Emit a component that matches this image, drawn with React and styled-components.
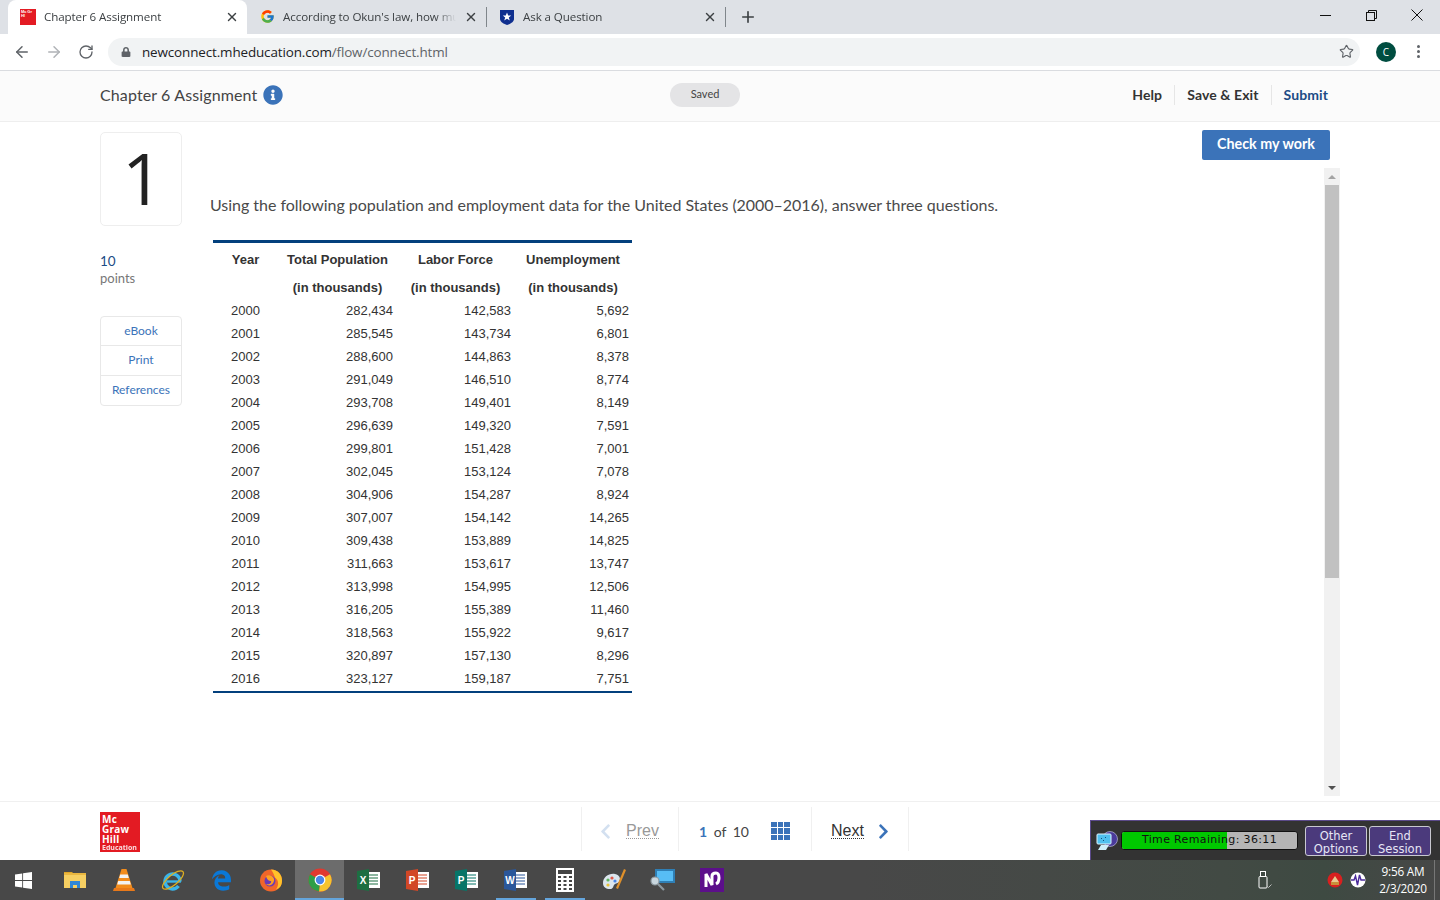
import React from "react";
import styled, { createGlobalStyle } from "styled-components";
import { ArrowLeft, ArrowRight, RotateCw, Star, X, Plus } from "lucide-react";
import { FaChevronLeft, FaChevronRight, FaInfoCircle, FaLock, FaEdgeLegacy } from "react-icons/fa";
import { FcGoogle } from "react-icons/fc";

const GlobalStyle = createGlobalStyle`
  html, body { margin: 0; padding: 0; background: #fff; }
  body { font-family: "Lato", "Open Sans", sans-serif; color: #333; }
  * { box-sizing: border-box; }
`;

const Page = styled.div`
  width: 1440px;
  height: 900px;
  display: flex;
  flex-direction: column;
  overflow: hidden;
`;

/* browser chrome */
const TabStrip = styled.div`
  height: 34px;
  flex: none;
  background: #dee1e6;
  display: flex;
  align-items: flex-end;
  padding-left: 8px;
`;

const Tab = styled.div`
  width: ${({ w }) => w}px;
  height: 34px;
  flex: none;
  display: flex;
  align-items: center;
  padding: 0 8px 1px 12px;
  gap: 8px;
  background: ${({ active }) => (active ? "#fff" : "transparent")};
  border-radius: 8px 8px 0 0;
  font-family: "Open Sans", sans-serif;
  font-size: 11.6px;
  letter-spacing: -0.1px;
  color: #3c4043;
`;

const TabDivider = styled.div`
  width: 1px;
  height: 20px;
  margin-bottom: 7px;
  background: #80868b;
  flex: none;
`;

const TabLabel = styled.span`
  flex: 1;
  white-space: nowrap;
  overflow: hidden;
  mask-image: linear-gradient(90deg, #000 88%, transparent 100%);
`;

const Favicon = styled.span`
  width: 16px;
  height: 16px;
  flex: none;
  display: flex;
  align-items: center;
  justify-content: center;
`;

const TinyLogo = styled.span`
  width: 16px;
  height: 16px;
  background: #e31b23;
  color: #fff;
  font: 700 4px/4px "Liberation Sans", sans-serif;
  padding: 1px;
  overflow: hidden;
`;

const NewTab = styled.div`
  width: 42px;
  height: 34px;
  padding-left: 2px;
  display: flex;
  align-items: center;
  justify-content: center;
  color: #3c4043;
`;

const WindowControls = styled.div`
  margin-left: auto;
  display: flex;
  align-self: flex-start;
  height: 30px;
  align-items: center;
  color: #111;
`;

const WindowButton = styled.div`
  width: 46px;
  height: 30px;
  display: flex;
  align-items: center;
  justify-content: center;
`;

const AddressRow = styled.div`
  height: 37px;
  flex: none;
  background: #fff;
  border-bottom: 1px solid #dadce0;
  display: flex;
  align-items: center;
  padding: 0 0 1px 6px;
  color: #5f6368;
`;

const NavButton = styled.div`
  width: 32px;
  height: 32px;
  display: flex;
  align-items: center;
  justify-content: center;
  color: ${({ off }) => (off ? "#b0b3b7" : "#5f6368")};
`;

const Omnibox = styled.div`
  margin-left: 6px;
  width: 1252px;
  height: 28px;
  border-radius: 14px;
  background: #f1f3f4;
  display: flex;
  align-items: center;
  padding: 0 6px 0 13px;
  gap: 11px;
`;

const Url = styled.span`
  flex: 1;
  font-family: "Open Sans", sans-serif;
  font-size: 13.45px;
  letter-spacing: -0.13px;
  color: #202124;
`;

const UrlPath = styled.span`
  color: #5f6368;
`;

const Avatar = styled.div`
  width: 20px;
  height: 20px;
  margin-left: 16px;
  border-radius: 50%;
  background: #004d40;
  color: #fff;
  font: 400 10px/20px "Open Sans", sans-serif;
  text-align: center;
`;

const Kebab = styled.div`
  margin-left: 20px;
  padding-left: 1px;
  display: flex;
  flex-direction: column;
  gap: 2px;
`;

const KebabDot = styled.span`
  width: 3px;
  height: 3px;
  border-radius: 50%;
  background: #5f6368;
`;

/* assignment header */
const AssignmentBar = styled.header`
  height: 51px;
  flex: none;
  background: #fbfbfb;
  border-bottom: 1px solid #eee;
  padding: 0 112px 2px 100px;
  display: grid;
  grid-template-columns: 570px 70px 1fr;
  align-items: center;
`;

const AssignmentTitle = styled.div`
  display: flex;
  align-items: center;
  gap: 6px;
  font-size: 16px;
  letter-spacing: 0.12px;
  color: #444;
`;

const TitleText = styled.span`
  margin-top: -2px;
`;

const SavedPill = styled.div`
  height: 24px;
  border-radius: 12px;
  background: #e4e4e6;
  font-size: 11px;
  line-height: 22px;
  text-align: center;
  color: #444;
`;

const HeaderLinks = styled.nav`
  display: flex;
  justify-content: flex-end;
  align-items: center;
`;

const HeaderLink = styled.a`
  font-size: 14px;
  font-weight: 700;
  letter-spacing: 0.1px;
  line-height: 20px;
  color: ${({ primary }) => (primary ? "#1c4b85" : "#333")};
  padding: 0 12px;
  border-right: ${({ primary }) => (primary ? "none" : "1px solid #e6e6e6")};
  &:last-child { padding-right: 0; }
`;

/* question area */
const Workspace = styled.main`
  flex: 1;
  min-height: 0;
  padding: 8px 100px 5px 100px;
  display: grid;
  grid-template-columns: 82px 1fr 16px;
  grid-template-rows: 38px 1fr;
`;

const Sidebar = styled.aside`
  grid-row: 1 / 3;
  padding-top: 2px;
`;

const NumberCard = styled.div`
  height: 94px;
  padding: 0 0 5px 3px;
  border: 1px solid #eee;
  border-radius: 5px;
  display: flex;
  align-items: center;
  justify-content: center;
  font-family: "Open Sans", sans-serif;
  font-size: 72px;
  line-height: 1;
  color: #222;
`;

const Points = styled.div`
  margin-top: 27px;
  font-size: 13.5px;
  line-height: 17px;
  color: #1c4b85;
`;

const PointsLabel = styled.div`
  font-size: 13px;
  line-height: 16px;
  color: #777;
`;

const ToolCard = styled.div`
  margin-top: 30px;
  border: 1px solid #e8e8e8;
  border-radius: 4px;
`;

const ToolRow = styled.a`
  display: block;
  height: 29.3px;
  text-align: center;
  font-size: 12px;
  line-height: 28px;
  color: #3b73b9;
  border-bottom: 1px solid #e8e8e8;
  &:last-child { border-bottom: none; }
`;

const CheckButton = styled.button`
  grid-column: 2 / 4;
  justify-self: end;
  margin-right: 10px;
  width: 128px;
  height: 30px;
  padding: 0 0 3px;
  border: none;
  border-radius: 2px;
  background: #3b73b9;
  color: #fff;
  font-family: inherit;
  font-size: 14.3px;
  font-weight: 700;
`;

const Question = styled.section`
  padding: 27px 0 0 28px;
`;

const Prompt = styled.p`
  margin: 0;
  font-size: 16px;
  letter-spacing: -0.03px;
  line-height: 20px;
  color: #4a4a4a;
`;

const DataTable = styled.table`
  margin: 25px 0 0 3px;
  width: 419px;
  table-layout: fixed;
  border-collapse: collapse;
  border-top: 3px solid #03407d;
  border-bottom: 2px solid #03407d;
  font-family: "Liberation Sans", sans-serif;
  font-size: 13px;
  color: #333;

  tbody tr:last-child td {
    height: 25px;
  }
`;

const HeadCell = styled.th`
  height: ${({ h }) => h}px;
  padding: 0;
  font-size: 13px;
  font-weight: 700;
  text-align: center;
  white-space: nowrap;
  color: #333;
`;

const Cell = styled.td`
  height: 23px;
  padding: 0 ${({ pad }) => pad || 0}px 0 0;
  text-align: ${({ center }) => (center ? "center" : "right")};
`;

const Scrollbar = styled.div`
  grid-column: 3;
  grid-row: 2;
  background: #f1f1f1;
  display: flex;
  flex-direction: column;
  align-items: center;
`;

const ScrollArrow = styled.div`
  height: 17px;
  flex: none;
  display: flex;
  align-items: center;
  justify-content: center;
  &::before {
    content: "";
    border-left: 4px solid transparent;
    border-right: 4px solid transparent;
    ${({ down }) => (down ? "border-top: 4px solid #505050;" : "border-bottom: 4px solid #a3a3a3;")}
  }
`;

const ScrollThumb = styled.div`
  width: 14px;
  height: 393px;
  background: #c1c1c1;
`;

const ScrollGap = styled.div`
  flex: 1;
`;

/* footer */
const Footer = styled.footer`
  position: relative;
  height: 59px;
  flex: none;
  border-top: 1px solid #f0f0f0;
  background: #fff;
  padding-left: 100px;
  display: flex;
  align-items: flex-start;
`;

const Logo = styled.div`
  width: 40px;
  height: 40px;
  margin-top: 10px;
  background: #e31b23;
  color: #fff;
  padding: 2px 1px 0 2px;
  font: 700 10px/10px "Open Sans", sans-serif;
  letter-spacing: 0.2px;
  overflow: hidden;
`;

const LogoSmall = styled.div`
  font-size: 7px;
  line-height: 7px;
  letter-spacing: 0;
  opacity: 0.85;
`;

const Pager = styled.nav`
  margin: 5px 0 0 441px;
  height: 44px;
  display: flex;
  border-left: 1px solid #f0f0f0;
`;

const PagerCell = styled.div`
  width: ${({ w }) => w}px;
  display: flex;
  align-items: center;
  padding: 4px 0 0 ${({ pad }) => pad}px;
  border-right: 1px solid #f0f0f0;
`;

const PagerLink = styled.a`
  font-family: "Liberation Sans", sans-serif;
  font-size: 16px;
  color: ${({ off }) => (off ? "#999" : "#333")};
  border-bottom: 1px dotted ${({ off }) => (off ? "#999" : "#333")};
  line-height: 15px;
  margin: 0 11px 0 ${({ left }) => left || 0}px;
`;

const PageCount = styled.span`
  width: 72px;
  flex: none;
  font-size: 14px;
  color: #444;
`;

const PageCurrent = styled.b`
  color: #3b73b9;
  margin-right: 3px;
`;

const PageTotal = styled.span`
  margin-left: 3px;
`;

const GridIcon = styled.div`
  width: 19px;
  height: 18px;
  display: grid;
  grid-template-columns: repeat(3, 1fr);
  gap: 1px;
`;

const GridDot = styled.span`
  background: #3b73b9;
`;

const ProctorPanel = styled.div`
  position: absolute;
  right: 0;
  bottom: 0;
  width: 350px;
  height: 40px;
  background: #333;
  border-top: 1px solid #5b4a8a;
  border-left: 1px solid #5b4a8a;
  display: flex;
  align-items: center;
  padding-left: 5px;
`;

const TimerBar = styled.div`
  position: relative;
  width: 177px;
  height: 19px;
  margin-left: 3px;
  background: #b5b5b5;
  border: 1px solid #111;
  border-radius: 3px;
  overflow: hidden;
  font: 400 11px/16px "DejaVu Sans", sans-serif;
  letter-spacing: 0.35px;
  color: #111;
  text-align: center;
`;

const TimerFill = styled.div`
  position: absolute;
  inset: 0 auto 0 0;
  background: #00c800;
`;

const TimerText = styled.span`
  position: relative;
`;

const ProctorButton = styled.button`
  width: 62px;
  height: 30px;
  margin-left: ${({ gap }) => gap}px;
  padding: 3px 0 0;
  background: #4b3a7c;
  border: 1px solid #c8c8d0;
  border-radius: 3px;
  color: #e6e6f5;
  font: 400 11.5px/13px "DejaVu Sans", sans-serif;
`;

/* windows taskbar */
const Taskbar = styled.div`
  height: 40px;
  flex: none;
  background: linear-gradient(90deg, #484848 0%, #484848 60%, #424a44 85%, #3e4a42 92%, #474747 100%);
  display: flex;
  padding-left: 1px;
`;

const TaskSlot = styled.div`
  position: relative;
  width: 49px;
  height: 40px;
  flex: none;
  display: flex;
  align-items: center;
  justify-content: center;
  background: ${({ active }) => (active ? "#6c6c6c" : "transparent")};
  &::after {
    content: "";
    position: absolute;
    bottom: 0;
    height: 2px;
    left: ${({ active }) => (active ? 0 : 5)}px;
    right: ${({ active }) => (active ? 0 : 4)}px;
    background: ${({ open }) => (open ? "#64a5dc" : "transparent")};
  }
`;

const StartSlot = styled(TaskSlot)`
  padding-right: 5px;
`;

const Tray = styled.div`
  margin-left: auto;
  display: flex;
  align-items: center;
  color: #fff;
`;

const TraySpacer = styled.span`
  width: ${({ w }) => w}px;
`;

const Clock = styled.div`
  width: 56px;
  margin: 0 1px 1px 9px;
  font-family: "Open Sans", sans-serif;
  font-size: 11.8px;
  line-height: 17px;
  letter-spacing: -0.2px;
  text-align: center;
`;

const DesktopEdge = styled.div`
  width: 6px;
  height: 40px;
  margin-left: 2px;
  border-left: 1px solid #777;
`;

const Win = () => (
  <svg width="17" height="17" viewBox="0 0 16 16" fill="#fff">
    <path d="M0 2.300 6.800 1.300V7.600H0ZM7.600 1.200 16 0V7.600H7.600ZM0 8.400H6.800V14.700L0 13.700ZM7.600 8.400H16V16L7.600 14.800Z" />
  </svg>
);

const Folder = () => (
  <svg width="22" height="20" viewBox="0 0 22 20">
    <path d="M0 2h8l2 2h-10z" fill="#e0a526" />
    <rect y="3" width="22" height="15" fill="#f6cf62" />
    <rect y="3" width="22" height="2" fill="#e9b63f" />
    <path d="M6 11h10v7h-3v-3h-4v3H6z" fill="#2f86d6" />
  </svg>
);

const Vlc = () => (
  <svg width="22" height="24" viewBox="0 0 22 24">
    <path d="M8.500 1h5l6 19H2.500z" fill="#f28c1c" />
    <path d="M7.200 6.500h7.600l1 3.500H6.200zM5.200 13h11.600l1 3.500H4.200z" fill="#f2f2f2" />
    <path d="M1 20h20l1 3H0z" fill="#e8791a" />
  </svg>
);

const Explorer = () => (
  <svg width="24" height="24" viewBox="0 0 24 24" fill="none">
    <path d="M19 13.500A7.500 7.500 0 1 0 17.500 18" stroke="#3ab5ea" strokeWidth="3.400" />
    <path d="M6 13.500H20" stroke="#3ab5ea" strokeWidth="2.400" />
    <ellipse cx="12" cy="12" rx="13" ry="5" transform="rotate(-40 12 12)" stroke="#e0b020" strokeWidth="1.300" />
  </svg>
);

const Firefox = () => (
  <svg width="24" height="24" viewBox="0 0 24 24">
    <circle cx="12" cy="12.500" r="11" fill="#f0662a" />
    <path d="M12 1.500c7 0 11 5 11 11s-3 8-6 9c3-4 3-9-1-12-1-3-2-5-4-8z" fill="#ffc22a" />
    <circle cx="11" cy="13" r="5.500" fill="#6a3bb5" />
    <path d="M7 8c4-2 9 1 8 5s-5 6-8 3c3 1 6-1 5-3-2 0-4-1-5-5z" fill="#ffa01f" />
  </svg>
);

const Chrome = () => (
  <svg width="24" height="24" viewBox="0 0 24 24">
    <circle cx="12" cy="12" r="11.500" fill="#e0392f" />
    <path d="M12 12 22 6.200A11.500 11.500 0 0 1 11 23.500z" fill="#f7c42d" />
    <path d="M12 12 11 23.500A11.500 11.500 0 0 1 2 6.200z" fill="#2f9e48" />
    <circle cx="12" cy="12" r="5.400" fill="#fff" />
    <circle cx="12" cy="12" r="4.200" fill="#4a86e8" />
  </svg>
);

const Office = ({ color, letter }) => (
  <svg width="24" height="22" viewBox="0 0 24 22">
    <rect x="9" y="3" width="14" height="16" fill="#fff" />
    <path d="M12 6h9M12 9h9M12 12h9M12 15h9" stroke={color} strokeWidth="1.200" />
    <path d="M0 2 12 0V22L0 20z" fill={color} />
    <text x="6" y="15" fill="#fff" fontFamily="Liberation Sans" fontSize="10" fontWeight="700" textAnchor="middle">
      {letter}
    </text>
  </svg>
);

const Calculator = () => (
  <svg width="18" height="24" viewBox="0 0 18 24">
    <rect width="18" height="24" fill="#fff" />
    <rect x="2" y="2" width="14" height="4" fill="#444" />
    {[8, 12, 16, 20].map((y) =>
      [2, 7.5, 13].map((x) => <rect key={`${x}${y}`} x={x} y={y} width="3" height="2" fill="#444" />)
    )}
  </svg>
);

const Palette = () => (
  <svg width="24" height="24" viewBox="0 0 24 24">
    <path d="M1 15c0-6 6-10 12-9 5 1 6 5 4 8-2 2-4 1-5 3s-1 4-4 4c-4 0-7-2-7-6z" fill="#dce6ee" />
    <circle cx="6" cy="12" r="1.600" fill="#5fb65f" />
    <circle cx="10" cy="10" r="1.600" fill="#e05a4a" />
    <circle cx="13" cy="13" r="1.600" fill="#4a86e8" />
    <circle cx="6" cy="17" r="1.600" fill="#e8c23a" />
    <path d="M22 1 14 20l2 1 8-19z" fill="#e0902a" />
  </svg>
);

const Magnifier = () => (
  <svg width="25" height="24" viewBox="0 0 25 24">
    <rect x="5" y="1" width="20" height="14" fill="#2f7fb5" />
    <rect x="7" y="3" width="16" height="10" fill="#57bdf5" />
    <circle cx="5" cy="13" r="4" fill="#c9d6de" stroke="#8b979e" strokeWidth="1.200" />
    <path d="M8 16l6 6" stroke="#8b979e" strokeWidth="2.200" />
  </svg>
);

const NoteApp = () => (
  <svg width="24" height="24" viewBox="0 0 24 24">
    <rect width="24" height="24" fill="#5c0f8b" />
    <path d="M6 19V6l6 11V8c0-2 2-3 4-3s3 2 3 5-1 5-3 6" fill="none" stroke="#fff" strokeWidth="3" />
  </svg>
);

const Usb = () => (
  <svg width="14" height="18" viewBox="0 0 14 18" fill="none" stroke="#fff">
    <rect x="2.500" y="0.500" width="5" height="5" />
    <rect x="1" y="5.500" width="8" height="11.500" rx="1" />
    <path d="M9 15l1.500 1.500 3-3" stroke="#bbb" />
  </svg>
);

const TrayBadge = () => (
  <svg width="16" height="16" viewBox="0 0 16 16">
    <circle cx="8" cy="8" r="7.500" fill="#d8201f" />
    <path d="M4 10l4-6 4 6z" fill="#e8c98f" />
    <rect x="4" y="10" width="8" height="3" fill="#c98f3a" />
  </svg>
);

const TrayWave = () => (
  <svg width="16" height="16" viewBox="0 0 16 16">
    <circle cx="8" cy="8" r="7.500" fill="#fff" />
    <path d="M1 8h3l1.500-4 2 9 2-10 1.500 5h4" fill="none" stroke="#4b2a9c" strokeWidth="1.400" />
  </svg>
);

const ProctorGlobe = () => (
  <svg width="22" height="20" viewBox="0 0 22 20">
    <circle cx="14" cy="8" r="7.500" fill="#4a3a9a" stroke="#cfd0ea" strokeWidth=".6" />
    <rect x="1" y="3" width="14" height="10" rx="1" fill="#4fc0ef" stroke="#dff5fd" />
    <path d="M5 7h1v1H5zM9 6h1v1H9zM7 9h1v1H7z" fill="#16507a" />
    <path d="M2 19l3-5h8l-3 5z" fill="#cfeffa" />
  </svg>
);

const data = [
  ["2000", "282,434", "142,583", "5,692"],
  ["2001", "285,545", "143,734", "6,801"],
  ["2002", "288,600", "144,863", "8,378"],
  ["2003", "291,049", "146,510", "8,774"],
  ["2004", "293,708", "149,401", "8,149"],
  ["2005", "296,639", "149,320", "7,591"],
  ["2006", "299,801", "151,428", "7,001"],
  ["2007", "302,045", "153,124", "7,078"],
  ["2008", "304,906", "154,287", "8,924"],
  ["2009", "307,007", "154,142", "14,265"],
  ["2010", "309,438", "153,889", "14,825"],
  ["2011", "311,663", "153,617", "13,747"],
  ["2012", "313,998", "154,995", "12,506"],
  ["2013", "316,205", "155,389", "11,460"],
  ["2014", "318,563", "155,922", "9,617"],
  ["2015", "320,897", "157,130", "8,296"],
  ["2016", "323,127", "159,187", "7,751"],
];

const App = () => {
  return (
    <>
      <GlobalStyle />
      <Page>
        <TabStrip>
          <Tab active w={239}>
            <Favicon>
              <TinyLogo>Mc Gr Hl</TinyLogo>
            </Favicon>
            <TabLabel>Chapter 6 Assignment</TabLabel>
            <X size={14} strokeWidth={2.4} />
          </Tab>
          <Tab w={239}>
            <Favicon>
              <FcGoogle size={15} />
            </Favicon>
            <TabLabel>According to Okun's law, how mu</TabLabel>
            <X size={14} strokeWidth={2.4} />
          </Tab>
          <TabDivider />
          <Tab w={238}>
            <Favicon>
              <svg width="16" height="16" viewBox="0 0 16 16">
                <path d="M1 1h14v9c0 3-4 5-7 6-3-1-7-3-7-6z" fill="#0f2f8f" />
                <path d="M8 3.500l1.200 3h3l-2.400 2 1 3L8 9.700 5.200 11.500l1-3-2.400-2h3z" fill="#fff" />
              </svg>
            </Favicon>
            <TabLabel>Ask a Question</TabLabel>
            <X size={14} strokeWidth={2.4} />
          </Tab>
          <TabDivider />
          <NewTab>
            <Plus size={18} strokeWidth={2.2} />
          </NewTab>
          <WindowControls>
            <WindowButton>
              <svg width="11" height="11" viewBox="0 0 11 11" stroke="#111" fill="none">
                <path d="M0 5.500h11" />
              </svg>
            </WindowButton>
            <WindowButton>
              <svg width="11" height="11" viewBox="0 0 11 11" stroke="#111" fill="none">
                <path d="M2.500 2.500V.5h8v8h-2" />
                <rect x=".5" y="2.500" width="8" height="8" />
              </svg>
            </WindowButton>
            <WindowButton>
              <svg width="12" height="12" viewBox="0 0 12 12" stroke="#111" fill="none">
                <path d="M.5.5l11 11M11.500.5l-11 11" />
              </svg>
            </WindowButton>
          </WindowControls>
        </TabStrip>

        <AddressRow>
          <NavButton>
            <ArrowLeft size={18} />
          </NavButton>
          <NavButton off>
            <ArrowRight size={18} />
          </NavButton>
          <NavButton>
            <RotateCw size={16} />
          </NavButton>
          <Omnibox>
            <FaLock size={10} />
            <Url>
              newconnect.mheducation.com<UrlPath>/flow/connect.html</UrlPath>
            </Url>
            <Star size={15} strokeWidth={1.8} />
          </Omnibox>
          <Avatar>C</Avatar>
          <Kebab>
            <KebabDot />
            <KebabDot />
            <KebabDot />
          </Kebab>
        </AddressRow>

        <AssignmentBar>
          <AssignmentTitle>
            <TitleText>Chapter 6 Assignment</TitleText>
            <FaInfoCircle size={20} color="#3b73b9" />
          </AssignmentTitle>
          <SavedPill>Saved</SavedPill>
          <HeaderLinks>
            <HeaderLink>Help</HeaderLink>
            <HeaderLink>Save &amp; Exit</HeaderLink>
            <HeaderLink primary>Submit</HeaderLink>
          </HeaderLinks>
        </AssignmentBar>

        <Workspace>
          <Sidebar>
            <NumberCard>1</NumberCard>
            <Points>10</Points>
            <PointsLabel>points</PointsLabel>
            <ToolCard>
              <ToolRow>eBook</ToolRow>
              <ToolRow>Print</ToolRow>
              <ToolRow>References</ToolRow>
            </ToolCard>
          </Sidebar>
          <CheckButton>Check my work</CheckButton>
          <Question>
            <Prompt>
              Using the following population and employment data for the United States (2000–2016), answer three questions.
            </Prompt>
            <DataTable>
              <colgroup>
                <col width="65" />
                <col width="119" />
                <col width="117" />
                <col width="118" />
              </colgroup>
              <thead>
                <tr>
                  <HeadCell h={34}>Year</HeadCell>
                  <HeadCell h={34}>Total Population</HeadCell>
                  <HeadCell h={34}>Labor Force</HeadCell>
                  <HeadCell h={34}>Unemployment</HeadCell>
                </tr>
                <tr>
                  <HeadCell h={23} />
                  <HeadCell h={23}>(in thousands)</HeadCell>
                  <HeadCell h={23}>(in thousands)</HeadCell>
                  <HeadCell h={23}>(in thousands)</HeadCell>
                </tr>
              </thead>
              <tbody>
                {data.map((row) => (
                  <tr key={row[0]}>
                    <Cell center>{row[0]}</Cell>
                    <Cell pad={4}>{row[1]}</Cell>
                    <Cell pad={3}>{row[2]}</Cell>
                    <Cell pad={3}>{row[3]}</Cell>
                  </tr>
                ))}
              </tbody>
            </DataTable>
          </Question>
          <Scrollbar>
            <ScrollArrow />
            <ScrollThumb />
            <ScrollGap />
            <ScrollArrow down />
          </Scrollbar>
        </Workspace>

        <Footer>
          <Logo>
            Mc
            <br />
            Graw
            <br />
            Hill
            <LogoSmall>Education</LogoSmall>
          </Logo>
          <Pager>
            <PagerCell w={97} pad={15}>
              <FaChevronLeft size={17} color="#d3e0f0" />
              <PagerLink off left={12}>Prev</PagerLink>
            </PagerCell>
            <PagerCell w={133} pad={20}>
              <PageCount>
                <PageCurrent>1</PageCurrent> of <PageTotal>10</PageTotal>
              </PageCount>
              <GridIcon>
                {Array.from({ length: 9 }, (_, i) => (
                  <GridDot key={i} />
                ))}
              </GridIcon>
            </PagerCell>
            <PagerCell w={97} pad={19}>
              <PagerLink>Next</PagerLink>
              <FaChevronRight size={17} color="#3b73b9" />
            </PagerCell>
          </Pager>
          <ProctorPanel>
            <ProctorGlobe />
            <TimerBar>
              <TimerFill style={{ width: "60%" }} />
              <TimerText>Time Remaining: 36:11</TimerText>
            </TimerBar>
            <ProctorButton gap={7}>
              Other
              <br />
              Options
            </ProctorButton>
            <ProctorButton gap={2}>
              End
              <br />
              Session
            </ProctorButton>
          </ProctorPanel>
        </Footer>

        <Taskbar>
          <StartSlot><Win /></StartSlot>
          <TaskSlot><Folder /></TaskSlot>
          <TaskSlot><Vlc /></TaskSlot>
          <TaskSlot><Explorer /></TaskSlot>
          <TaskSlot><FaEdgeLegacy size={21} color="#0a78d7" /></TaskSlot>
          <TaskSlot><Firefox /></TaskSlot>
          <TaskSlot active open><Chrome /></TaskSlot>
          <TaskSlot><Office color="#1d6f42" letter="X" /></TaskSlot>
          <TaskSlot><Office color="#d24726" letter="P" /></TaskSlot>
          <TaskSlot><Office color="#077568" letter="P" /></TaskSlot>
          <TaskSlot open><Office color="#2b579a" letter="W" /></TaskSlot>
          <TaskSlot open><Calculator /></TaskSlot>
          <TaskSlot><Palette /></TaskSlot>
          <TaskSlot><Magnifier /></TaskSlot>
          <TaskSlot><NoteApp /></TaskSlot>
          <Tray>
            <Usb />
            <TraySpacer w={55} />
            <TrayBadge />
            <TraySpacer w={7} />
            <TrayWave />
            <Clock>
              9:56 AM
              <br />
              2/3/2020
            </Clock>
            <DesktopEdge />
          </Tray>
        </Taskbar>
      </Page>
    </>
  );
};

export default App;
